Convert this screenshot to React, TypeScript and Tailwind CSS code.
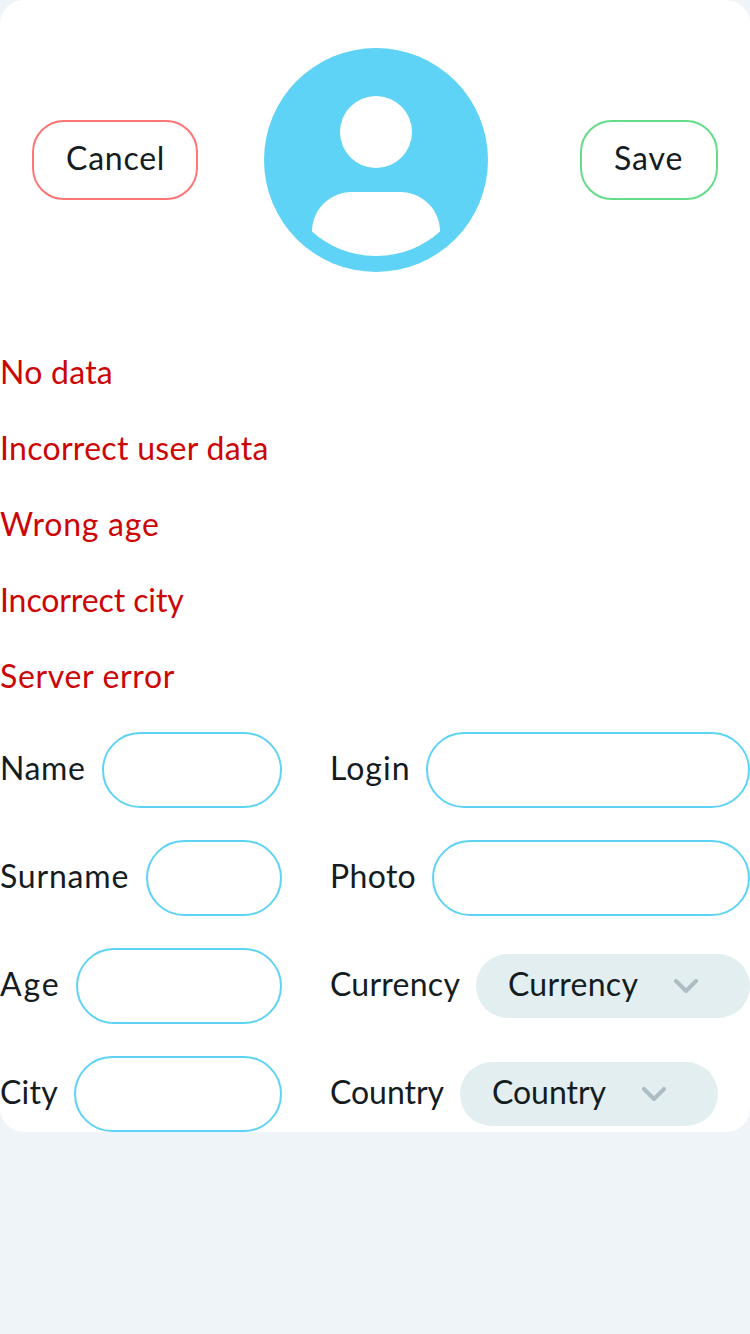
import type { ReactNode } from "react";

type FieldProps = { label: string; labelClass: string; children?: ReactNode };

const errors = [
  { text: "No data", spacing: "tracking-[0.25px]" },
  { text: "Incorrect user data", spacing: "tracking-[0.3px]" },
  { text: "Wrong age", spacing: "tracking-[0.75px]" },
  { text: "Incorrect city", spacing: "tracking-[-0.1px]" },
  { text: "Server error", spacing: "tracking-[0.65px]" },
];

function Field({ label, labelClass, children }: FieldProps) {
  return (
    <label className="flex h-[76px] items-center gap-4">
      <span className={`shrink-0 whitespace-nowrap pb-1 ${labelClass}`}>{label}</span>
      {children ?? (
        <input
          type="text"
          className="h-[76px] min-w-0 flex-1 rounded-[38px] border-2 border-[#5fd3f5] bg-white px-8 outline-none"
        />
      )}
    </label>
  );
}

function Select({ text, className, textClass }: { text: string; className: string; textClass: string }) {
  return (
    <button type="button" className={`flex h-16 shrink-0 items-center gap-9 rounded-full bg-[#e2eef0] pl-8 text-left ${className}`}>
      <span className={`whitespace-nowrap pb-1 ${textClass}`}>{text}</span>
      <svg
        width="24"
        height="14"
        viewBox="0 0 24 14"
        fill="none"
        stroke="#acbdc3"
        strokeWidth="4"
        strokeLinecap="round"
        strokeLinejoin="round"
      >
        <path d="M2 2 12 12 22 2" />
      </svg>
    </button>
  );
}

function Avatar() {
  return (
    <svg className="ml-[66px] shrink-0" width="224" height="224" viewBox="0 0 224 224">
      <circle cx="112" cy="112" r="112" fill="#5fd3f5" />
      <circle cx="112" cy="84" r="36" fill="#fff" />
      <path d="M48 183.5C48 161.5 66 144 88 144H136C158 144 176 161.5 176 183.5C159 199 137 208 112 208S65 199 48 183.5Z" fill="#fff" />
    </svg>
  );
}

export default function App() {
  return (
    <div className="min-h-screen bg-[#eef4f7] font-['Lato',sans-serif] text-[32px] leading-[40px] text-[#141c1f]">
      <main className="h-[1132px] rounded-3xl bg-white">
        <header className="flex items-center px-8 py-12">
          <button type="button" className="h-20 w-[166px] shrink-0 rounded-[32px] border-2 border-[#ff7575] pb-1 pl-8 text-left tracking-[0.75px]">
            Cancel
          </button>
          <Avatar />
          <button type="button" className="ml-auto h-20 w-[138px] shrink-0 rounded-[32px] border-2 border-[#64dc88] pb-1 pl-8 text-left tracking-[0.9px]">
            Save
          </button>
        </header>
        <div className="flex flex-col gap-8 py-8 text-[#cc0505]">
          {errors.map((error) => (
            <p key={error.text} className={`pb-1 ${error.spacing}`}>
              {error.text}
            </p>
          ))}
        </div>
        <form className="flex gap-12">
          <div className="flex w-[282px] flex-col gap-8">
            <Field label="Name" labelClass="w-[86px] tracking-[0.6px]" />
            <Field label="Surname" labelClass="w-[130px] tracking-[0.8px]" />
            <Field label="Age" labelClass="w-[60px] tracking-[1.8px]" />
            <Field label="City" labelClass="w-[58px] tracking-[0.2px]" />
          </div>
          <div className="flex w-[420px] flex-col gap-8">
            <Field label="Login" labelClass="w-20 tracking-[1px]" />
            <Field label="Photo" labelClass="w-[86px] tracking-[0.35px]" />
            <Field label="Currency" labelClass="w-[130px] tracking-[0.25px]">
              <Select text="Currency" className="w-[274px]" textClass="w-[130px] tracking-[0.25px]" />
            </Field>
            <Field label="Country" labelClass="w-[114px] tracking-[-0.05px]">
              <Select text="Country" className="w-[258px]" textClass="w-[114px] tracking-[-0.05px]" />
            </Field>
          </div>
        </form>
      </main>
    </div>
  );
}
